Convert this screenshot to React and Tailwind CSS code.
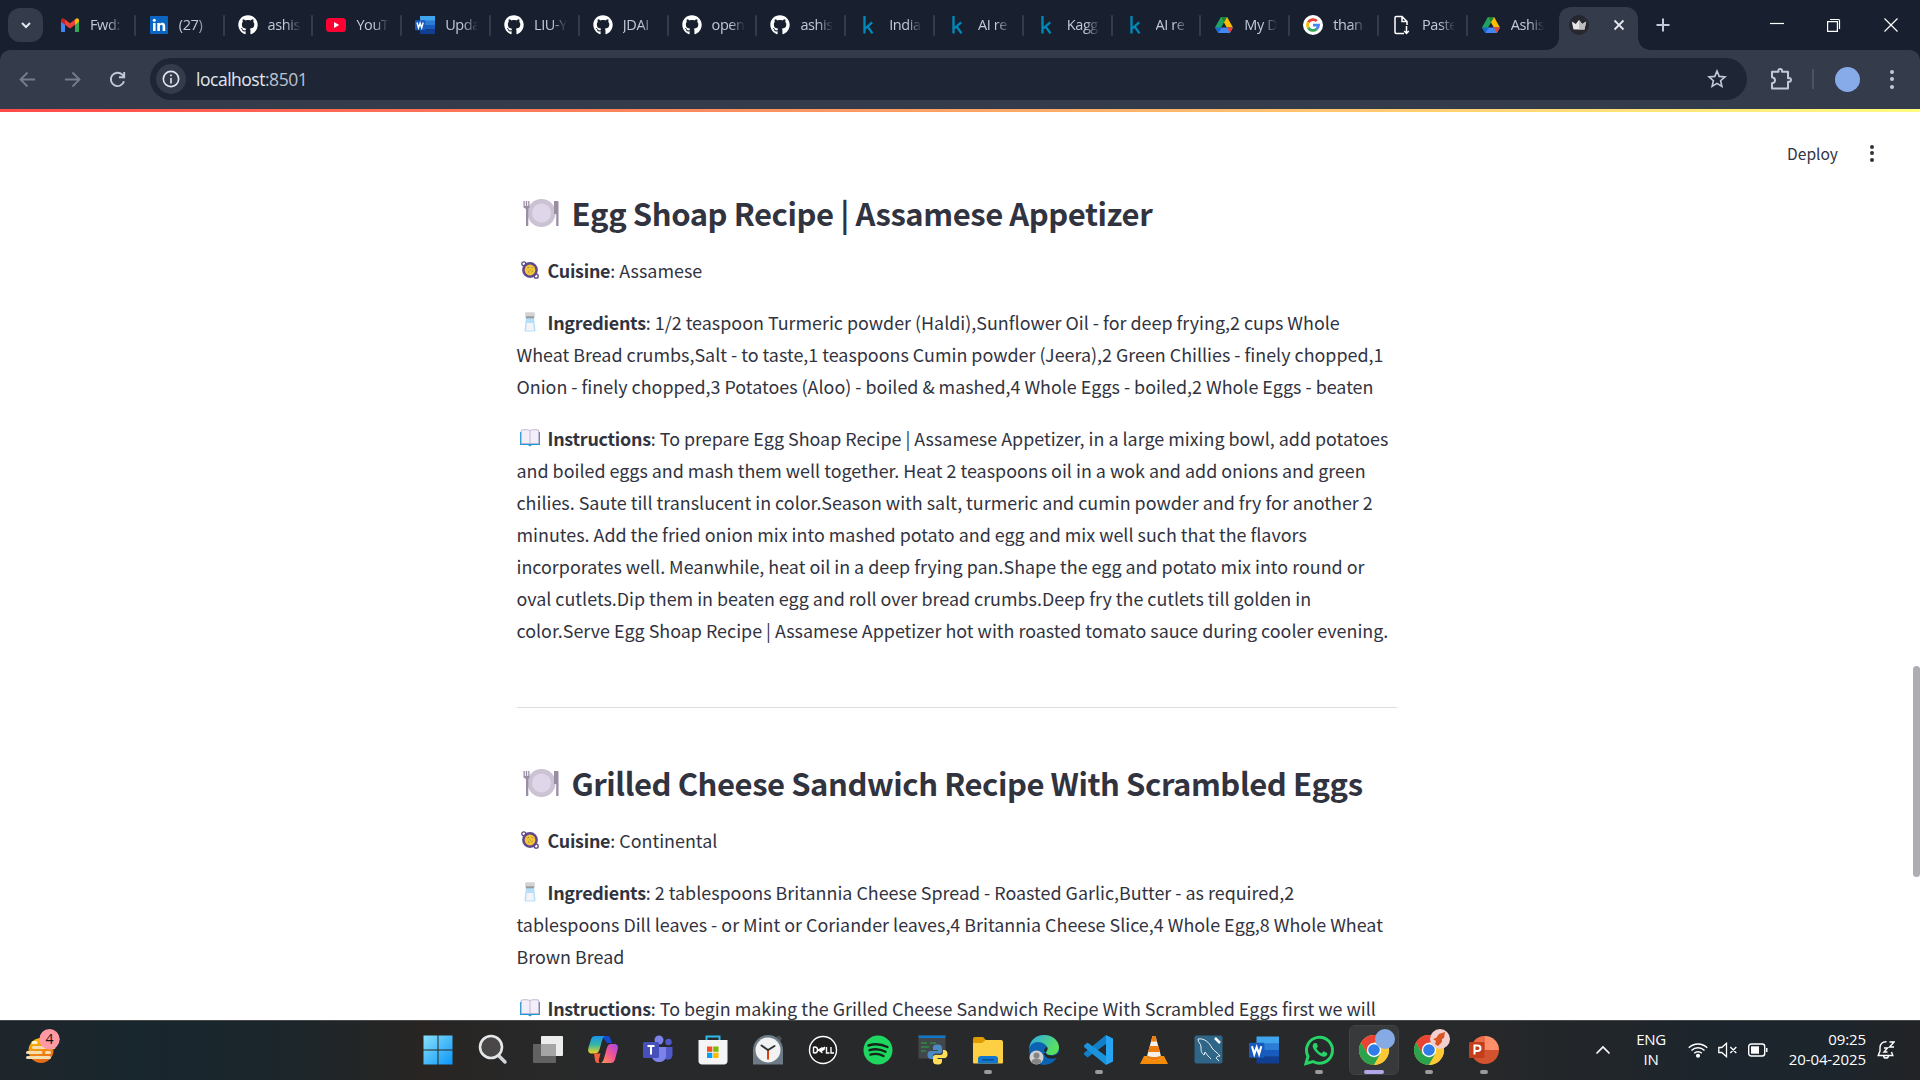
import React from "react";
import { FaGithub } from "react-icons/fa";

const Svg = ({ s = 20, vb = "0 0 20 20", children, className = "" }) => (
  <svg width={s} height={s} viewBox={vb} className={"shrink-0 " + className} fill="none">{children}</svg>
);

/* ---------- favicons ---------- */
const Gmail = () => (
  <Svg>
    <path d="M1 6v10.2c0 .5.4.8.8.8H5V8z" fill="#4285f4" />
    <path d="M15 8v9h3.200c.5 0 .8-.4.8-.8V6z" fill="#34a853" />
    <path d="M15 4.500V9.800L19 6.800V5.200c0-1.900-2-2.600-3.200-1.500z" fill="#fbbc04" />
    <path d="M5 9.800V4.500l5 3.800 5-3.800v5.300l-5 3.800z" fill="#ea4335" />
    <path d="M1 5.200v1.600l4 3V4.500l-.8-.8C3 2.600 1 3.300 1 5.200z" fill="#c5221f" />
  </Svg>
);
const LinkedIn = () => (
  <Svg>
    <rect x="1" y="1" width="18" height="18" rx="1" fill="#0a66c2" />
    <path d="M4 8h2.600v8H4zM8.300 8h2.500v1.100c.5-.8 1.400-1.300 2.500-1.300 2.300 0 2.900 1.500 2.900 3.600V16h-2.600v-4.200c0-1-.1-2-1.300-2s-1.400 1-1.400 2V16H8.300z" fill="#fff" />
    <circle cx="5.300" cy="5.300" r="1.500" fill="#fff" />
  </Svg>
);
const GitHub = () => <FaGithub size={20} color="#fff" className="shrink-0" />;
const YouTube = () => (
  <Svg>
    <rect x="0" y="3" width="20" height="14" rx="3.500" fill="#ff0033" />
    <path d="M8 7v6l5.200-3z" fill="#fff" />
  </Svg>
);
const Word = ({ s = 20 }) => (
  <Svg s={s}>
    <rect x="5" y="1" width="15" height="5" fill="#41a5ee" />
    <rect x="5" y="5.500" width="15" height="4.500" fill="#2b7cd3" />
    <rect x="5" y="10" width="15" height="4.500" fill="#185abd" />
    <rect x="5" y="14.500" width="15" height="4.500" fill="#103f91" />
    <rect x="0" y="5.200" width="10.300" height="10" rx=".8" fill="#185abd" />
    <path d="M2 7.500l1.500 5.300 1.600-4.700 1.600 4.700 1.500-5.300" stroke="#fff" strokeWidth="1.400" />
  </Svg>
);
const Kaggle = () => (
  <Svg>
    <path d="M5.500 1V18.500M13.200 7.300l-7 6.200M8.500 11.300l5 7" stroke="#008abc" strokeWidth="2.300" />
  </Svg>
);
const Drive = () => (
  <Svg>
    <path d="M6.900 2h6.200L10 7.600 4.200 17.500 1 12.400z" fill="#1ea362" />
    <path d="M6.900 2h6.200L19 12.400h-6.200z" fill="#fbbc04" />
    <path d="M6.900 2h6.200L10 7.400z" fill="#188038" />
    <path d="M4.100 18l3.100-5.600H19L15.900 18z" fill="#4285f4" />
    <path d="M12.800 12.400H19L15.900 18z" fill="#ea4335" />
    <path d="M1 12.400h6.200L4.100 18z" fill="#1967d2" />
  </Svg>
);
const Google = () => (
  <Svg>
    <circle cx="10" cy="10" r="10" fill="#fff" />
    <g strokeWidth="2.800">
      <path d="M5.300 7.300A5.500 5.500 0 0 1 13.900 6.100" stroke="#ea4335" />
      <path d="M5.300 7.300a5.500 5.500 0 0 0 0 5.400" stroke="#fbbc04" />
      <path d="M5.300 12.700a5.500 5.500 0 0 0 8.200 1.500" stroke="#34a853" />
      <path d="M13.500 14.200a5.500 5.500 0 0 0 2-4H10" stroke="#4285f4" />
    </g>
  </Svg>
);
const PasteFile = () => (
  <Svg>
    <path d="M12 18.500H4.200A1.200 1.200 0 0 1 3 17.300V2.700A1.200 1.200 0 0 1 4.200 1.500H10L15 6.500V10M10 1.500v5h5M14.500 11v7.500M12.200 16l2.300 2.500 2.300-2.500" stroke="#fff" strokeWidth="1.500" />
  </Svg>
);
const Crown = () => (
  <Svg>
    <circle cx="10" cy="10" r="10" fill="#26272f" />
    <path d="M2.800 6.500l4 2.500L10 5l3.200 4 4-2.500L15.500 14.500h-11z" fill="#e6e6e6" />
    <path d="M10 5l3.200 4 4-2.500L15.500 14.500H10z" fill="#bdbdbd" />
  </Svg>
);

const tabs = [
  [Gmail, "Fwd:"], [LinkedIn, "(27)"], [GitHub, "ashis"], [YouTube, "YouT"], [Word, "Upda"],
  [GitHub, "LIU-Y"], [GitHub, "JDAI"], [GitHub, "open"], [GitHub, "ashis"], [Kaggle, "India"],
  [Kaggle, "AI re"], [Kaggle, "Kagg"], [Kaggle, "AI re"], [Drive, "My D"], [Google, "than"],
  [PasteFile, "Paste"], [Drive, "Ashis"],
];

function TabStrip() {
  return (
    <div className="flex h-[50px] bg-[#18202f] pl-2">
      <div className="mt-2 flex h-[34px] w-[35px] items-center justify-center rounded-xl bg-[#343b4b]">
        <Svg s={12} vb="0 0 12 12"><path d="M2 4l4 4 4-4" stroke="#e3e6ee" strokeWidth="2" /></Svg>
      </div>
      <div className="ml-1 flex">
        {tabs.map(([Icon, label], i) => (
          <div key={i} className="flex w-[88.800px] items-center pl-[13px]">
            <Icon />
            <div className="ml-[10px] w-[36px] whitespace-nowrap text-[14.500px] leading-5 tracking-[-0.4px] text-[#c3c9db] [mask-image:linear-gradient(to_right,black_50%,transparent_92%)]">
              {label}
            </div>
            {i < 16 && <div className="ml-auto h-[21px] w-[2px] rounded bg-[#343b4b]" />}
          </div>
        ))}
      </div>
      <div className="mt-[7px] flex items-end">
        <div className="-ml-[10px] size-3 bg-[radial-gradient(circle_at_0_0,transparent_11.500px,#343b4b_12px)]" />
        <div className="flex h-[43px] w-[79px] items-center rounded-t-xl bg-[#343b4b] pb-[7px] pl-[10px]">
          <Crown />
          <Svg s={12} vb="0 0 12 12" className="ml-[24px]"><path d="M1.500 1.500l9 9M10.500 1.500l-9 9" stroke="#e3e6ee" strokeWidth="1.800" /></Svg>
        </div>
        <div className="size-3 bg-[radial-gradient(circle_at_100%_0,transparent_11.500px,#343b4b_12px)]" />
      </div>
      <Svg s={14} vb="0 0 14 14" className="ml-[6px] mt-[18px]"><path d="M7 .5v13M.5 7h13" stroke="#c3c9db" strokeWidth="2" /></Svg>
      <div className="ml-auto mr-[22px] mt-[18px] flex gap-[43px]">
        <Svg s={14} vb="0 0 14 14"><path d="M0 5.500h14" stroke="#fff" strokeWidth="1.200" /></Svg>
        <Svg s={14} vb="0 0 14 14"><path d="M.6 3.600h9.800v9.800H.6zM3 1.500h8.500a1 1 0 0 1 1 1V11" stroke="#fff" strokeWidth="1.200" /></Svg>
        <Svg s={14} vb="0 0 14 14"><path d="M.5.5l13 13M13.500.5l-13 13" stroke="#fff" strokeWidth="1.200" /></Svg>
      </div>
    </div>
  );
}

function Toolbar() {
  return (
    <div className="h-[59px] bg-[#18202f]">
      <div className="flex h-full items-center rounded-t-[10px] bg-[#343b4b] pb-px pl-[19px] pr-[26px]">
        <Svg s={17} vb="0 0 17 17"><path d="M16 8.500H2M8.500 1.500l-7 7 7 7" stroke="#767c8b" strokeWidth="1.800" /></Svg>
        <Svg s={17} vb="0 0 17 17" className="ml-7"><path d="M1 8.500h14M8.500 1.500l7 7-7 7" stroke="#767c8b" strokeWidth="1.800" /></Svg>
        <Svg s={17} vb="0 0 17 17" className="ml-7"><path d="M15 10.200A6.700 6.700 0 1 1 13.300 3.700L15 5.500M15.200 1v5.300H10" stroke="#c3c9db" strokeWidth="1.900" /></Svg>
        <div className="ml-6 flex h-[42px] w-[1597px] items-center rounded-full bg-[#1e2636] pl-[6px] pr-5">
          <div className="flex size-[30px] items-center justify-center rounded-full bg-[#343b4b]">
            <Svg s={18}><circle cx="10" cy="10" r="8.500" stroke="#e3e6ee" strokeWidth="1.800" /><path d="M10 9v6M10 5v2" stroke="#e3e6ee" strokeWidth="1.800" /></Svg>
          </div>
          <div className="ml-[10px] text-[17.500px] tracking-[-0.48px] text-[#e3e6ee]">localhost<span className="text-[#bcc1cf]">:8501</span></div>
          <Svg s={20} className="ml-auto"><path d="M10 2l2.200 5.400 5.800.5-4.400 3.800 1.300 5.700-4.900-3-4.900 3 1.300-5.700L2 7.900l5.800-.5z" stroke="#c3c9db" strokeWidth="1.600" /></Svg>
        </div>
        <Svg s={22} vb="0 0 22 22" className="ml-[23px]">
          <path d="M2 3.700h6.500C8 1.600 9 1 10.200 1S12.500 1.600 12 3.700h6v6.500c2.500-.5 3 .8 3 1.800s-.8 2.200-3 1.700V20.500H2v-5.200c4-.7 4-5.500 0-6.100z" stroke="#c3c9db" strokeWidth="2" strokeLinejoin="round" />
        </Svg>
        <div className="ml-5 h-5 w-[2px] bg-[#4b5263]" />
        <div className="ml-[21px] size-[25px] rounded-full bg-[#86abe8]" />
        <div className="ml-auto flex flex-col gap-[3.500px]">
          {[0, 1, 2].map((i) => <div key={i} className="size-[4px] rounded-full bg-[#c3c9db]" />)}
        </div>
      </div>
    </div>
  );
}

/* ---------- emoji drawings ---------- */
const Plate = () => (
  <svg width="36" height="30" viewBox="0 0 36 30" className="ml-[6px] mr-[13px] shrink-0">
    <circle cx="18.500" cy="15" r="14" fill="#cbc2d4" /><circle cx="18.500" cy="15" r="9.500" fill="#e0d6ea" />
    <path d="M.5 3h1.300v5h1V3h1.400v5h1V3h1.300v6.500L5.300 11v17H3V11L.5 9.500z" fill="#998ea4" />
    <path d="M31 3h3.500c.7 0 1 .5 1 1v24h-2.300V16H31z" fill="#998ea4" />
  </svg>
);
const Pan = () => (
  <svg width="18" height="18" viewBox="0 0 18 18" className="ml-px">
    <circle cx="2.800" cy="2.800" r="2" stroke="#5b4383" strokeWidth="1.300" fill="none" /><circle cx="15.200" cy="15.200" r="2" stroke="#5b4383" strokeWidth="1.300" fill="none" />
    <circle cx="9" cy="9" r="7.900" fill="#5c488a" /><circle cx="9" cy="9" r="5.400" fill="#f9c23c" />
    <path d="M6.500 7l1.500-.8M10.500 6l1.200 1.200M7 10.500l1.200 1M10.500 11l1.300-1M8.500 8.800l1 .4" stroke="#6a9a23" strokeWidth="1" />
  </svg>
);
const Salt = () => (
  <svg width="18" height="20" viewBox="0 0 18 20" className="ml-px">
    <path d="M5 5.500h8L14.500 18c.1.900-.4 1.500-1.200 1.500H4.700C3.900 19.500 3.400 18.900 3.500 18z" fill="#b4dffb" />
    <path d="M5.800 11h6.400l.8 7.500H5z" fill="#f4f4f8" /><rect x="4.200" y=".3" width="9.600" height="4.700" rx="1.200" fill="#d3d3d3" /><rect x="4.800" y="4.300" width="8.400" height="2" fill="#9b9b9b" />
  </svg>
);
const Book = () => (
  <svg width="20" height="18" viewBox="0 0 20 18">
    <path d="M0 3h20v13H12l-2 1.500L8 16H0z" fill="#1c9ad6" /><path d="M1.300 1C5 .5 8 .5 10 1.500 12 .5 15 .5 18.700 1v13.500H1.300z" fill="#f3eef8" />
    <path d="M1.300 14.500V1C5 .5 8 .5 10 1.500 12 .5 15 .5 18.700 1v13.500M10 1.500v13.500M1.300 14.500h17.400" stroke="#bfb2cf" strokeWidth=".9" fill="none" />
  </svg>
);

const Heading = ({ children }) => (
  <h3 className="flex h-[42px] items-center whitespace-nowrap font-['Noto_Sans_CJK_SC',sans-serif] text-[31px] text-[#31333f]">
    <Plate /><span className="font-semibold tracking-[-0.440px]">{children}</span>
  </h3>
);
const Para = ({ icon, label, lines }) => (
  <p className="mt-5 font-['Noto_Sans_CJK_SC',sans-serif] text-[17.900px] leading-8 text-[#31333f]">
    {lines.map((l, i) => (
      <span key={i} className="flex h-8 items-center whitespace-nowrap">
        {i === 0 && <><span className="mr-[1px] flex w-[30px] items-center pl-[3px]">{icon}</span><b className="mr-[4px] font-bold"><span className="tracking-[-0.250px]">{label}</span><span className="font-normal">:</span></b></>}
        <span>{l}</span>
      </span>
    ))}
  </p>
);

function Page() {
  return (
    <div className="relative h-[908px] overflow-hidden bg-white">
      <div className="absolute right-[46px] top-[29px] flex items-center gap-[32px] font-['Noto_Sans_CJK_SC',sans-serif] text-[15.600px] leading-6 text-[#31333f]">
        Deploy
        <div className="flex flex-col gap-[2.500px]">{[0, 1, 2].map((i) => <div key={i} className="size-[4px] rounded-full bg-[#31333f]" />)}</div>
      </div>
      <div className="absolute right-0 top-[554px] h-[211px] w-[7px] rounded-full bg-[#aeadb3]" />
      <main className="ml-[516.500px] w-[880px] pt-[80px]">
        <Heading>Egg Shoap Recipe | Assamese Appetizer</Heading>
        <Para icon={<Pan />} label="Cuisine" lines={["Assamese"]} />
        <Para icon={<Salt />} label="Ingredients" lines={[
          "1/2 teaspoon Turmeric powder (Haldi),Sunflower Oil - for deep frying,2 cups Whole",
          "Wheat Bread crumbs,Salt - to taste,1 teaspoons Cumin powder (Jeera),2 Green Chillies - finely chopped,1",
          "Onion - finely chopped,3 Potatoes (Aloo) - boiled & mashed,4 Whole Eggs - boiled,2 Whole Eggs - beaten"]} />
        <Para icon={<Book />} label="Instructions" lines={[
          "To prepare Egg Shoap Recipe | Assamese Appetizer, in a large mixing bowl, add potatoes",
          "and boiled eggs and mash them well together. Heat 2 teaspoons oil in a wok and add onions and green",
          "chilies. Saute till translucent in color.Season with salt, turmeric and cumin powder and fry for another 2",
          "minutes. Add the fried onion mix into mashed potato and egg and mix well such that the flavors",
          "incorporates well. Meanwhile, heat oil in a deep frying pan.Shape the egg and potato mix into round or",
          "oval cutlets.Dip them in beaten egg and roll over bread crumbs.Deep fry the cutlets till golden in",
          "color.Serve Egg Shoap Recipe | Assamese Appetizer hot with roasted tomato sauce during cooler evening."]} />
        <hr className="mb-[54px] mt-[61px] border-[#dedee1]" />
        <Heading>Grilled Cheese Sandwich Recipe With Scrambled Eggs</Heading>
        <Para icon={<Pan />} label="Cuisine" lines={["Continental"]} />
        <Para icon={<Salt />} label="Ingredients" lines={[
          "2 tablespoons Britannia Cheese Spread - Roasted Garlic,Butter - as required,2",
          "tablespoons Dill leaves - or Mint or Coriander leaves,4 Britannia Cheese Slice,4 Whole Egg,8 Whole Wheat",
          "Brown Bread"]} />
        <Para icon={<Book />} label="Instructions" lines={["To begin making the Grilled Cheese Sandwich Recipe With Scrambled Eggs first we will"]} />
      </main>
    </div>
  );
}

/* ---------- taskbar icons (30px boxes) ---------- */
const I = ({ children }) => <svg width="30" height="30" viewBox="0 0 30 30" fill="none" className="overflow-visible">{children}</svg>;
const Chrome = ({ children }) => (
  <I>
    <circle cx="15" cy="15" r="15" fill="#fcc934" />
    <path d="M2 7.500A15 15 0 0 1 28 7.500H15L8.500 18.700z" fill="#ea4335" />
    <path d="M2 7.500A15 15 0 0 0 15 30l6.500-11.300H8.500z" fill="#2ba24c" />
    <path d="M15 7.500h13A15 15 0 0 1 15 30l6.500-11.300z" fill="#fcc934" />
    <circle cx="15" cy="15" r="7.200" fill="#fff" /><circle cx="15" cy="15" r="5.800" fill="#2f7de9" />
    {children}
  </I>
);
const apps = [
  { el: <I><defs><linearGradient id="w" x1="0" y1="0" x2="1" y2="1"><stop stopColor="#8ae1fb" /><stop offset="1" stopColor="#0a96f8" /></linearGradient></defs><path d="M.5.500h14v14H.5zM15.500.500h14v14h-14zM.5 15.500h14v14H.5zM15.500 15.500h14v14h-14z" fill="url(#w)" /></I> },
  { el: <I><path d="M20 20l7 7" stroke="#cfd4d8" strokeWidth="3.500" strokeLinecap="round" /><circle cx="13" cy="12" r="11" fill="#4a4748" stroke="#e4e7ea" strokeWidth="2.600" /></I> },
  { el: <I><rect x="8" y="1" width="22" height="20" rx="1" fill="#ececec" /><rect x="0" y="9" width="23" height="19" rx="1" fill="#6c6c6c" fillOpacity=".85" /><path d="M8 9h15v12H8z" fill="#a5a5a5" /></I> },
  { el: <I>
    <defs><linearGradient id="c1" x1="0" y1="0" x2="0" y2="1"><stop stopColor="#1793ee" /><stop offset=".5" stopColor="#37b6a5" /><stop offset="1" stopColor="#f4d31d" /></linearGradient><linearGradient id="c2" x1="1" y1="0" x2="0" y2="1"><stop stopColor="#a445ee" /><stop offset=".5" stopColor="#f2568e" /><stop offset="1" stopColor="#ff9850" /></linearGradient></defs>
    <path d="M14 1h5.500c1.800 0 2.500 1 3 3L24 8h-5z" fill="#1449d0" />
    <path d="M7.500 1H17c-2.500 1-3 5-4.500 10-1.200 4-1.500 7-5 7.500H3.500c-3 0-4-2.500-3-6L3 4.500C3.800 2 5 1 7.500 1z" fill="url(#c1)" />
    <path d="M22.500 28H13c2.500-1 3-5 4.500-10 1.200-4 1.500-8.500 5-9h4c3 0 4 2.500 3 6l-2.500 9.500c-.8 2.500-2 3.500-4.500 3.500z" fill="url(#c2)" />
    <path d="M6 18.500h6.500L11 24c-.5 2-.5 4 2 4h-3c-2 0-2.500-1-3-3z" fill="#f6603c" />
  </I> },
  { el: <I><circle cx="16" cy="5" r="4.500" fill="#7b83eb" /><circle cx="25.500" cy="7" r="3.200" fill="#5059c9" /><path d="M20 12h9.500v8c0 6-8 6-9 1z" fill="#5059c9" /><path d="M9 12h14v9c0 8-14 8-14 0z" fill="#7b83eb" /><rect x="0" y="7" width="16" height="16" rx="1.500" fill="#4650ba" /><path d="M4.500 11h7M8 11v8.500" stroke="#fff" strokeWidth="2" /></I> },
  { el: <I><path d="M8.500 6V1.500h13V6" stroke="#2fb9ee" strokeWidth="2" /><path d="M.5 5h29v21c0 2-1.500 3.500-3.500 3.500H4C2 29.500.5 28 .5 26z" fill="#f5f5f5" /><path d="M9 11.500h5.300v5.300H9z" fill="#f25022" /><path d="M15.200 11.500h5.300v5.300h-5.300z" fill="#7fba00" /><path d="M9 17.700h5.300V23H9z" fill="#00a4ef" /><path d="M15.200 17.700h5.300V23h-5.300z" fill="#ffb900" /></I> },
  { el: <I><path d="M23 2l3-1.500 3 3L27 7z" fill="#4a4f53" /><path d="M0 15a15 15 0 0 1 30 0v14.500H0z" fill="#6d7b86" /><circle cx="15" cy="15" r="12.500" fill="#f2f2f2" /><path d="M15 15v9.500" stroke="#d9400c" strokeWidth="2" /><path d="M8.500 10.500L15 15l6.500-4" stroke="#333" strokeWidth="2" strokeLinecap="round" /></I> },
  { el: <I><circle cx="15" cy="15" r="13.500" fill="#1e1e1f" stroke="#fff" strokeWidth="1.400" /><path d="M5.500 12v6M5.500 12h1.200c3.800 0 3.800 6 0 6H5.500M14.500 12.500l-4 2.500 4 2.800M17 12l-5 3.300M12.500 16.800L17 13.500M18.500 12v6h3M23 12v6h3" stroke="#fff" strokeWidth="1.400" /></I> },
  { el: <I><circle cx="15" cy="15" r="14.500" fill="#1ed760" /><path d="M5.500 10.500c6-2 13-1.500 19 1.500M6.500 15.200c5.500-1.600 11-1 16 1.500M7.500 19.600c4.500-1.200 9-.8 13 1.400" stroke="#15251a" strokeWidth="2.400" strokeLinecap="round" /></I> },
  { el: <I><path d="M.5.5h27v23H.5z" fill="#42474b" /><path d="M.5.5h27v2.500H.5z" fill="#1177c8" /><path d="M3 8h6M3 12h8M3 16h5M12 8h6" stroke="#2f8a3e" strokeWidth="1.500" /><path d="M19.500 9.500c-4 0-4.500 1.500-4.500 4V15h5v1h-7c-3 0-3.500 2-3.500 4s1 4 3.500 4h2v-3c0-1.500 1-2.500 2.500-2.500h4.500c1.500 0 2-1 2-2.500v-3c0-2.500-1.500-3.500-4.500-3.500z" fill="#4a8bc4" /><path d="M19.500 29.500c4 0 4.500-1.500 4.500-4V24h-4.500v-1H26c3 0 3.500-2 3.500-4s-1-4-3.500-4h-1v2.500c0 1.500-1 2.500-2.500 2.500h-5c-1.500 0-2.500 1-2.500 2.500v3.500c0 2.500 1.500 3.500 4.500 3.500z" fill="#ffdf5a" /></I> },
  { dot: 1, el: <I><path d="M0 4a2 2 0 0 1 2-2h8l3 3h-1L9 9H0z" fill="#e09b00" /><path d="M0 8h9l3-3h16a2 2 0 0 1 2 2v20.500a1 1 0 0 1-1 1H1a1 1 0 0 1-1-1z" fill="#fdd044" /><path d="M5 28.500V24a3 3 0 0 1 3-3h14a3 3 0 0 1 3 3v4.500z" fill="#1177cf" /><path d="M9.500 24.800h11" stroke="#0a4c94" strokeWidth="1.500" /></I> },
  { el: <I><defs><linearGradient id="e" x1="0" y1="0" x2="1" y2=".5"><stop stopColor="#2aa9ee" /><stop offset="1" stopColor="#5be15c" /></linearGradient></defs><circle cx="15" cy="15" r="15" fill="#0c63b4" /><path d="M0 14C1 5 7 0 15 0c9 0 15 6 15 12.500 0 5-4 7.500-8 7.500-3 0-5-1-5-2.500 0-1 1.500-1.500 1.500-4C18 10 14 7 9 7S1 10 0 14z" fill="url(#e)" /><path d="M15 18c0 4 5 7 12 5l2.500-1 .5-5c-2 3-5 3.500-8 3.500-3 0-5-1-5-2.500z" fill="#262626" /><path d="M18.500 13.500c0 2.500-1.500 3-1.500 4-3-1-2-4 1-6z" fill="#262626" /><circle cx="7.500" cy="22.500" r="7" fill="#d0d0d0" /><circle cx="7.500" cy="20.500" r="3" fill="#858585" /><path d="M2.500 27.300c0-5 10-5 10 0-3 2.500-7 2.500-10 0z" fill="#858585" /></I> },
  { dot: 1, el: <I><path d="M22 0l7 3.500v23L22 30z" fill="#27a5f5" /><path d="M22 0v9L3.500 22.500 0 19.500v-1.500z" fill="#1180c9" /><path d="M22 30v-9L3.500 7.500 0 10.500V12z" fill="#1b93dd" /></I> },
  { el: <I><path d="M5 21h20l4 8H1z" fill="#f58a07" /><path d="M13.500 1h3l6 22c-3 3-12 3-15 0z" fill="#f4f1ec" /><path d="M13.500 1h3l1.500 5.500h-6zM10.700 11h8.600l1.700 6H9z" fill="#ee7d10" /><path d="M7.500 23l.6-2.500c4 2 10 2 13.800 0l.6 2.500c-3 3-12 3-15 0z" fill="#ee7d10" /></I> },
  { el: <I><rect x=".5" y=".5" width="28" height="28" rx="2" fill="#2f6587" /><path d="M4 4c6-1 11 3 14 9 3 4 5 4 8 8-3 0-3 1-4 2l3 3M4 4c0 4 3 4 3 8 0 3 0 6 3 8l1-3c2 3 4 5 6 7" stroke="#e9f1f5" strokeWidth="1" /><path d="M21 3l5 5" stroke="#fff" strokeWidth="2.500" /></I> },
  { el: <Word s={30} /> },
  { dot: 1, el: <I><path d="M2 28.500l2-7.200A13 13 0 1 1 9 26.500z" stroke="#25d366" strokeWidth="3" /><path d="M10.500 8c-3 2-2 5 1 8.500s7 6 9.500 5 2.500-3 2-3.600l-3.300-1.700-2 2c-2.200-.6-4.700-3.200-5.200-5l1.500-2L12.500 8z" fill="#25d366" /></I> },
  { active: 1, el: <Chrome><circle cx="26" cy="4" r="10" fill="#86abe4" /></Chrome> },
  { dot: 1, el: <Chrome><circle cx="26" cy="4" r="10" fill="#f3cfd0" /><path d="M25-1l6-2-1 6-2 1v3l-4 4-3-2 1-3-3-2 3-1z" fill="#d9541e" /></Chrome> },
  { dot: 1, el: <I><path d="M16 1a14 14 0 0 0 0 28 14 14 0 0 0 14-14z" fill="#d35230" /><path d="M16 1a14 14 0 0 0-14 14h14z" fill="#ed6c47" /><path d="M16 1a14 14 0 0 1 14 14H16z" fill="#ff8f6b" /><rect x="0" y="7" width="15.500" height="16" rx="1.200" fill="#c43e1c" /><path d="M5.500 19.500v-9h3c4 0 4 5.500 0 5.500h-3" stroke="#fff" strokeWidth="2" /></I> },
];

function Taskbar() {
  return (
    <div className="flex h-[60px] border-t border-[#47494b] bg-[linear-gradient(90deg,#1f262b_0,#18262d_7%,#1b262c_14%,#282523_22%,#28292a_30%,#28292a_75%,#232629_81%,#1c252d_90%,#1d252c_96%,#222325_100%)] text-white">
      <div className="w-[410px] pl-[24px] pt-[8px]">
        <svg width="36" height="36" viewBox="0 0 36 36">
          <defs><linearGradient id="sun" x1="0" y1="0" x2=".3" y2="1"><stop stopColor="#fcc408" /><stop offset="1" stopColor="#e56a17" /></linearGradient></defs>
          <circle cx="17" cy="21.500" r="12.500" fill="url(#sun)" />
          <g stroke="#f8ddb0" strokeWidth="3" strokeLinecap="round"><path d="M9 13.500h3" stroke="#fff3cd" /><path d="M9.500 18.500H30M3.500 23.500H17M22.500 23.500h3M3.500 28.500h22" /></g>
          <circle cx="25.500" cy="10.300" r="10.200" fill="#ff99a4" />
          <text x="25.500" y="15.300" textAnchor="middle" fontSize="14" fill="#111" fontFamily="Open Sans">4</text>
        </svg>
      </div>
      <div className="flex">
        {apps.map((a, i) => (
          <div key={i} className="flex w-[55.100px] justify-center pt-[4px]">
            <div className={"flex h-[50px] w-[50px] flex-col items-center pt-[10px] " + (a.active ? "rounded-md border border-[#414243] bg-[#38393a] !pt-[9px]" : "")}>
              {a.el}
              {a.dot && <div className="mt-[5px] h-1 w-2 rounded-full bg-[#9b9b9c]" />}
              {a.active && <div className="mt-[5px] h-1 w-5 rounded-full bg-[#b4a7e8]" />}
            </div>
          </div>
        ))}
      </div>
      <div className="ml-auto mr-[25px] flex items-center pb-px">
        <Svg s={14} vb="0 0 14 14"><path d="M1 10l6-6 6 6" stroke="#fff" strokeWidth="1.700" strokeLinecap="round" /></Svg>
        <div className="ml-[25px] w-[32px] -translate-y-px text-center text-[15px] leading-5 tracking-[-0.3px]">ENG<br />IN</div>
        <svg width="20" height="16" viewBox="0 0 20 16" fill="none" stroke="#fff" strokeWidth="1.500" className="ml-[21px]">
          <path d="M.8 5.800a13 13 0 0 1 18.400 0M3.500 8.500a9.300 9.300 0 0 1 13 0M6.200 11.200a5.400 5.400 0 0 1 7.600 0" /><circle cx="10" cy="13.700" r="1.300" fill="#fff" />
        </svg>
        <svg width="20" height="16" viewBox="0 0 20 16" fill="none" stroke="#fff" strokeWidth="1.300" className="ml-[10px]"><path d="M.8 5.500h3L8.500 1.300v13.400L3.800 10.500h-3zM12.300 5l6 6M18.300 5l-6 6" /></svg>
        <svg width="20" height="14" viewBox="0 0 20 14" fill="none" className="ml-[10px]"><rect x=".7" y="1" width="16" height="12" rx="2.500" stroke="#fff" strokeWidth="1.400" /><rect x="3" y="3.300" width="8" height="7.400" fill="#fff" /><path d="M18 5v4h1.500V5z" fill="#fff" /></svg>
        <div className="ml-[18px] w-[80px] -translate-y-px whitespace-nowrap text-right text-[15px] leading-5 tracking-[-0.1px]">09:25<br />20-04-2025</div>
        <svg width="18" height="20" viewBox="0 0 18 20" fill="none" stroke="#fff" strokeWidth="1.400" className="ml-[11px]">
          <path d="M9.500 1.700C5.500 1.500 3 4 3 7.500V11l-1.800 4.500h14.600L14.500 12M6.500 15.800c.5 3 4.500 3 5 0" /><path d="M7 8h3.500L7 12h3.500M12.500 2H17l-4.500 5H17" />
        </svg>
      </div>
    </div>
  );
}

export default function App() {
  return (
    <div className="h-[1080px] w-[1920px] overflow-hidden bg-white font-['Open_Sans',sans-serif]">
      <TabStrip />
      <Toolbar />
      <div className="h-[3px] bg-[linear-gradient(90deg,#ff4b4b,#fffd80)]" />
      <Page />
      <Taskbar />
    </div>
  );
}
